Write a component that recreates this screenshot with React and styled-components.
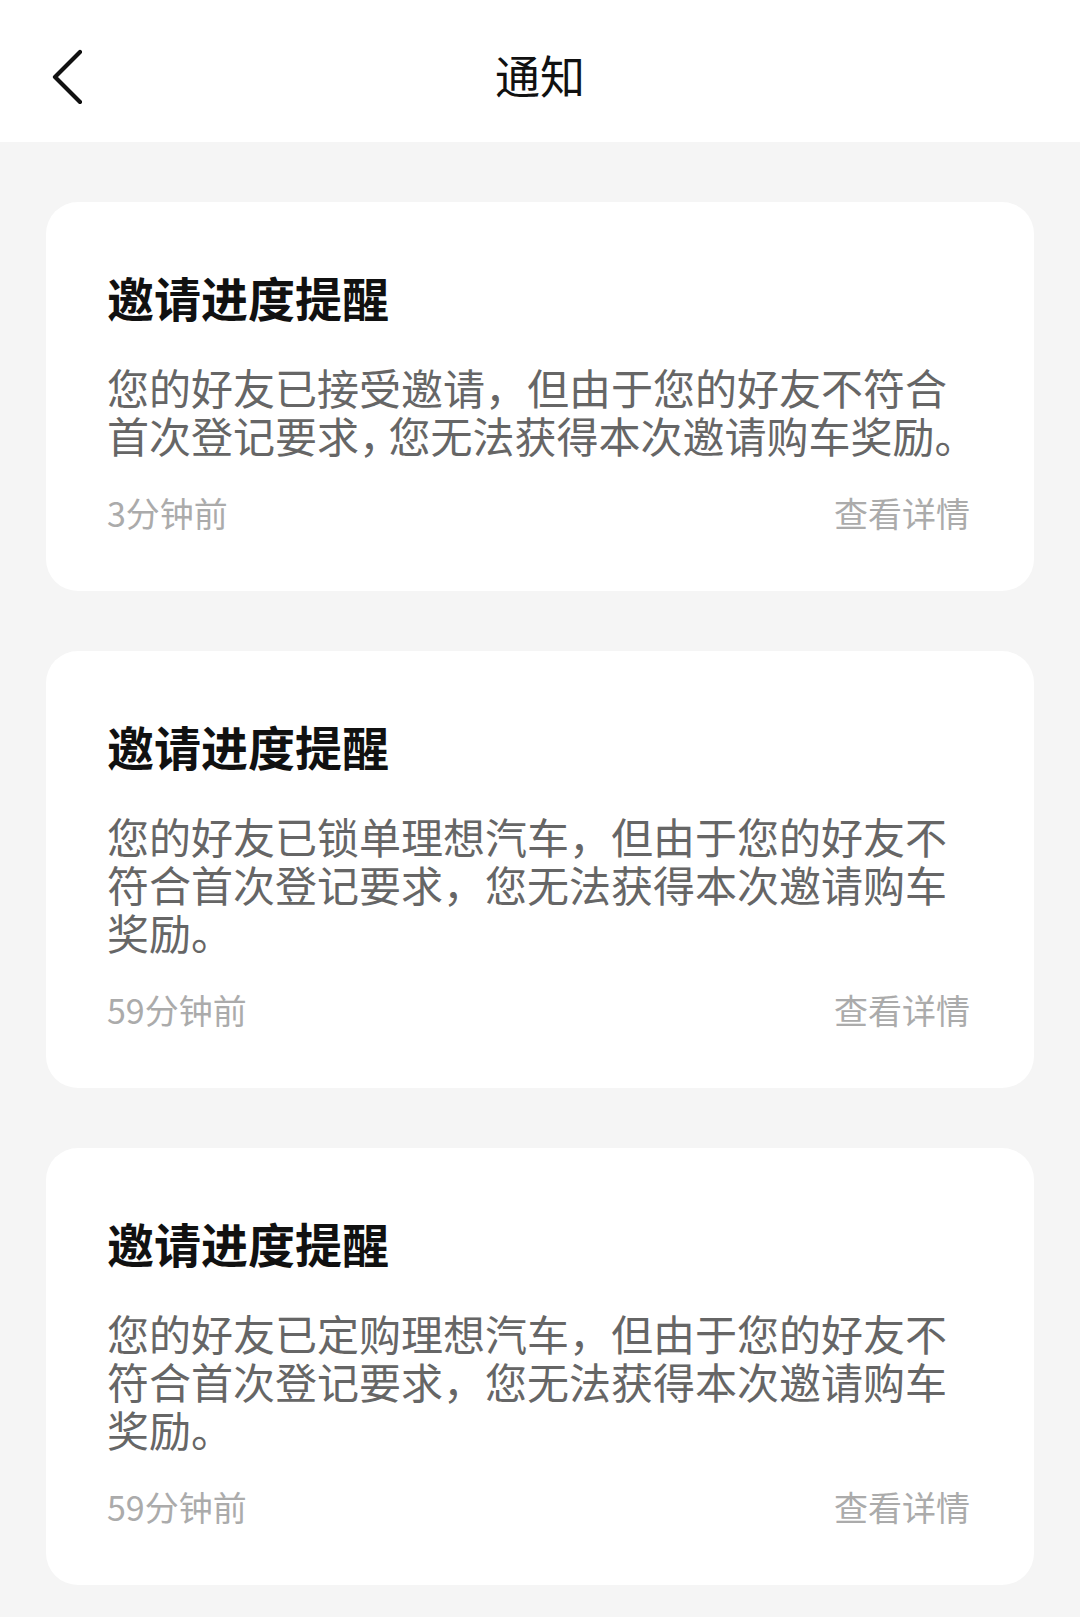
import styled, { createGlobalStyle } from "styled-components";

const GlobalStyle = createGlobalStyle`
  * { box-sizing: border-box; }
  body {
    margin: 0;
    background: #f5f5f5;
    font-family: "Noto Sans CJK SC", "Noto Sans", sans-serif;
  }
`;

const avisos = [
  {
    id: 1,
    titulo: "邀请进度提醒",
    texto: ["您的好友已接受邀请", "，", "但由于您的好友不符合首次登记要求", "，", "您无法获得本次邀请购车奖励。"],
    apertar: [false, true],
    tempo: "3分钟前",
  },
  {
    id: 2,
    titulo: "邀请进度提醒",
    texto: ["您的好友已锁单理想汽车", "，", "但由于您的好友不符合首次登记要求", "，", "您无法获得本次邀请购车奖励。"],
    apertar: [false, false],
    tempo: "59分钟前",
  },
  {
    id: 3,
    titulo: "邀请进度提醒",
    texto: ["您的好友已定购理想汽车", "，", "但由于您的好友不符合首次登记要求", "，", "您无法获得本次邀请购车奖励。"],
    apertar: [false, false],
    tempo: "59分钟前",
  },
];

function Voltar() {
  return (
    <svg width="40" height="60" viewBox="0 0 40 60" fill="none">
      <path d="M38 8 L13 33 L38 58" stroke="#111" strokeWidth="4.2" strokeLinecap="round" strokeLinejoin="round" />
    </svg>
  );
}

function Cartao({ aviso }) {
  let virgula = 0;
  return (
    <Card>
      <Titulo>{aviso.titulo}</Titulo>
      <Corpo>
        {aviso.texto.map((parte, i) => {
          if (parte === "，") {
            const curta = aviso.apertar[virgula];
            virgula++;
            return (
              <Virgula key={i} $curta={curta}>
                {parte}
              </Virgula>
            );
          }
          return <span key={i}>{parte}</span>;
        })}
      </Corpo>
      <Rodape>
        <span>{aviso.tempo}</span>
        <Detalhes>查看详情</Detalhes>
      </Rodape>
    </Card>
  );
}

export default function App() {
  return (
    <>
      <GlobalStyle />
      <Pagina>
        <Topo>
          <BotaoVoltar>
            <Voltar />
          </BotaoVoltar>
          <TituloTopo>通知</TituloTopo>
        </Topo>
        <Lista>
          {avisos.map((a) => (
            <Cartao key={a.id} aviso={a} />
          ))}
        </Lista>
      </Pagina>
    </>
  );
}

const Pagina = styled.div`
  width: 1080px;
  min-height: 1617px;
  background: #f5f5f5;
`;

const Topo = styled.header`
  position: relative;
  height: 142px;
  background: #fff;
  display: flex;
  align-items: center;
  justify-content: center;
`;

const BotaoVoltar = styled.div`
  position: absolute;
  left: 42px;
  top: 44px;
  width: 40px;
  height: 60px;
  display: flex;
`;

const TituloTopo = styled.h1`
  margin: 0;
  font-size: 45px;
  font-weight: 400;
  color: #111;
  line-height: 60px;
  margin-top: 8px;
`;

const Lista = styled.main`
  display: flex;
  flex-direction: column;
  gap: 60px;
  padding: 60px 46px 0;
`;

const Card = styled.section`
  background: #fff;
  border-radius: 32px;
  padding: 65px 54px 54px 61px;
`;

const Titulo = styled.h2`
  margin: 0;
  font-size: 47px;
  line-height: 60px;
  font-weight: 700;
  color: #111;
`;

const Corpo = styled.p`
  margin: 36px 0 0;
  font-size: 42px;
  line-height: 48px;
  color: #666;
  word-break: break-all;
`;

const Virgula = styled.span`
  letter-spacing: ${(p) => (p.$curta ? "-0.3em" : "0")};
`;

const Rodape = styled.div`
  margin-top: 30px;
  display: flex;
  justify-content: space-between;
  align-items: center;
  font-size: 34px;
  line-height: 48px;
  color: #ababab;
`;

const Detalhes = styled.span`
  padding-right: 10px;
`;
